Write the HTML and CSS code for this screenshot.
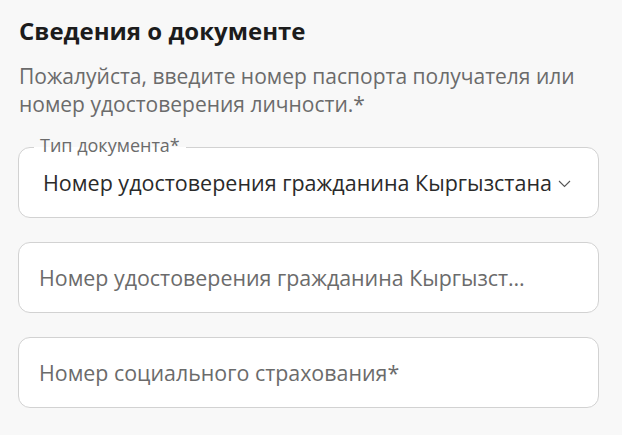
FILE: index.html
```
<!DOCTYPE html>
<html>
  <head>
    <meta charset="utf-8">
    <link rel="stylesheet" href="styles.css">
  </head>
  <body>
    <div class="document-form">
      <h2 class="title">Сведения о документе</h2>
      <p class="hint">Пожалуйста, введите номер паспорта получателя или номер удостоверения личности.*</p>

      <div class="field field-select">
        <span class="field-label">Тип документа*</span>
        <span class="field-value">Номер удостоверения гражданина Кыргызстана</span>
        <svg class="chevron" width="13" height="8" viewBox="0 0 13 8">
          <path d="M1 1 L6.5 6.5 L12 1" fill="none" stroke="#555" stroke-width="1.1"/>
        </svg>
      </div>

      <div class="field field-long">
        <span class="field-placeholder">Номер удостоверения гражданина Кыргызстана*</span>
      </div>

      <div class="field">
        <span class="field-placeholder">Номер социального страхования*</span>
      </div>
    </div>
  </body>
</html>
```

FILE: styles.css
```
body {
  margin: 0;
  background-color: #f8f8f8;
  font-family: "Open Sans", "Noto Sans", sans-serif;
}

.document-form {
  width: 581px;
  padding: 15px 0 0 18px;
}

.title {
  margin: 0 0 0 1px;
  font-size: 24px;
  font-weight: 700;
  line-height: 32px;
  color: #1c1c1c;
}

.hint {
  margin: 15px 0 0 1px;
  font-size: 21px;
  line-height: 28px;
  color: #6b6b6b;
}

.field {
  position: relative;
  display: flex;
  align-items: center;
  height: 69px;
  margin-top: 24px;
  padding: 0 20px;
  background-color: #fff;
  border: 1px solid #d2d2d2;
  border-radius: 12px;
}

.field-select {
  margin-top: 29px;
  padding: 0 20px 0 24px;
}

.field-long {
  padding-right: 66px;
}

.field-label {
  position: absolute;
  top: -13px;
  left: 15px;
  padding: 0 6px;
  background: linear-gradient(to bottom, #f8f8f8 12px, #fff 12px);
  font-size: 18px;
  line-height: 20px;
  color: #6b6b6b;
}

.field-value {
  font-size: 21.5px;
  color: #2a2a2a;
  white-space: nowrap;
}

.chevron {
  margin-left: 6px;
  margin-top: 2px;
}

.field-placeholder {
  font-size: 21.4px;
  color: #6b6b6b;
  white-space: nowrap;
  overflow: hidden;
  text-overflow: ellipsis;
}
```
